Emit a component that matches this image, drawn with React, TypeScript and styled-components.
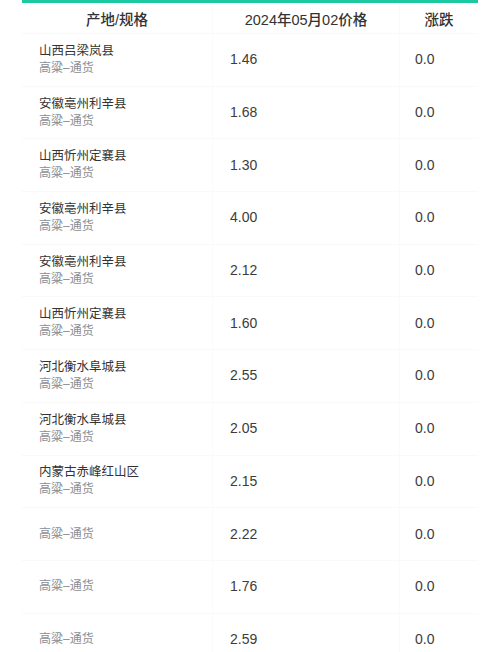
import React from "react";
import styled, { createGlobalStyle } from "styled-components";

const Global = createGlobalStyle`
  html, body { margin: 0; padding: 0; background: #ffffff; }
  body { font-family: "Liberation Sans", "Noto Sans CJK SC", sans-serif; }
`;

const Page = styled.div`
  width: 500px;
  height: 652px;
  overflow: hidden;
  background: #fff;
  padding: 0 22px;
  box-sizing: border-box;
`;

const Table = styled.div`
  border-top: 3px solid #1dc9a1;
  display: grid;
  grid-template-columns: 191px 187px 78px;
`;

const HeadCell = styled.div`
  height: 30px;
  display: flex;
  align-items: center;
  justify-content: center;
  font-size: 14.5px;
  color: #333;
  font-weight: 500;
  border-right: 1px solid #fafafa;
  border-bottom: 1px solid #f9f9f9;
  &:nth-child(3n) { border-right: none; }
`;

const Cell = styled.div<{ $pad: number }>`
  height: 52.7px;
  box-sizing: border-box;
  padding-left: ${(p) => p.$pad}px;
  display: flex;
  flex-direction: column;
  justify-content: center;
  border-right: 1px solid #fafafa;
  border-bottom: 1px solid #f9f9f9;
  &:nth-child(3n) { border-right: none; }
`;

const Name = styled.div`
  font-size: 12.5px;
  color: #333;
  line-height: 17px;
`;

const Sub = styled.div`
  font-size: 12px;
  color: #8a8f96;
  line-height: 17px;
`;

const Value = styled.div`
  font-size: 14px;
  color: #3c3c3c;
  line-height: 18px;
  margin-top: -1px;
`;

const rows: { name?: string; price: string }[] = [
  { name: "山西吕梁岚县", price: "1.46" },
  { name: "安徽亳州利辛县", price: "1.68" },
  { name: "山西忻州定襄县", price: "1.30" },
  { name: "安徽亳州利辛县", price: "4.00" },
  { name: "安徽亳州利辛县", price: "2.12" },
  { name: "山西忻州定襄县", price: "1.60" },
  { name: "河北衡水阜城县", price: "2.55" },
  { name: "河北衡水阜城县", price: "2.05" },
  { name: "内蒙古赤峰红山区", price: "2.15" },
  { price: "2.22" },
  { price: "1.76" },
  { price: "2.59" },
];

export default function App() {
  return (
    <Page>
      <Global />
      <Table>
        <HeadCell>产地/规格</HeadCell>
        <HeadCell>2024年05月02价格</HeadCell>
        <HeadCell>涨跌</HeadCell>
        {rows.map((r, i) => (
          <React.Fragment key={i}>
            <Cell $pad={17}>
              {r.name && <Name>{r.name}</Name>}
              <Sub>高粱–通货</Sub>
            </Cell>
            <Cell $pad={17}>
              <Value>{r.price}</Value>
            </Cell>
            <Cell $pad={15}>
              <Value>0.0</Value>
            </Cell>
          </React.Fragment>
        ))}
      </Table>
    </Page>
  );
}
